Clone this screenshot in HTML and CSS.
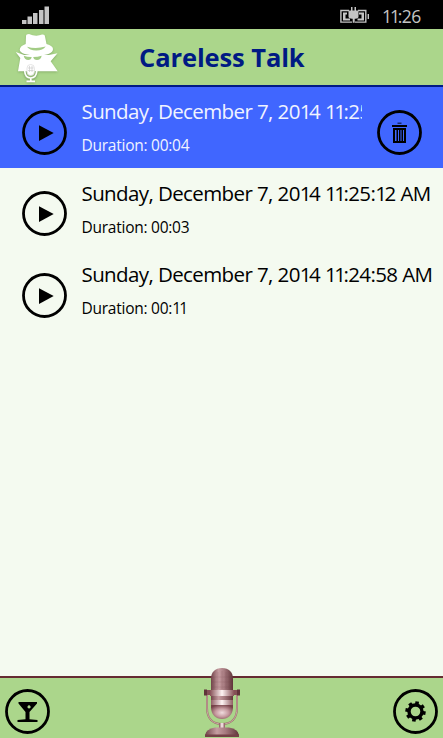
FILE: index.html
```html
<!DOCTYPE html>
<html lang="en">
<head>
<meta charset="utf-8">
<title>Careless Talk</title>
<link rel="stylesheet" href="styles.css">
</head>
<body>
<div class="status">
  <svg class="signal" width="28" height="18" viewBox="0 0 28 18" fill="#c4c4c4"><path d="M0 14h4.500v4H0zM5.500 10.500h4.500v7.500H5.500zM11 7h4.500v11H11zM17 4h4.500v14H17zM22.500 0.500h4.500v17.500h-4.500z"/></svg>
  <svg class="battery" width="30" height="18" viewBox="0 0 30 18"><path d="M9 4.500H.9v11.600H12M18 4.500h7.800v11.600H15M28.300 8v5" fill="none" stroke="#c4c4c4" stroke-width="1.400"/><path d="M3 6.500h4v2H5.500v4H10v2H3zM19 6.500h5v8h-6.500v-2h4v-4H19zM8.500 4.500H11V1h1.500v3.500h2V1H16v3.500h2.500v6q0 2-3 2.300h-.8v4h-2v-4H12q-3.500-.3-3.500-2.300z" fill="#c4c4c4"/></svg>
  <span class="clock"><span class="ones">11</span>:26</span>
</div>
<header class="header">
  <svg class="logo" width="46" height="52" viewBox="0 0 46 52">
    <g fill="#fff"><path d="M11 5Q11 3 14 3q7 3 13 .5 3-.5 3 2L31.500 13q6.500 2 6.500 5 0 6.300-16 6.300T4.700 19q0-4 6-6z"/><path d="M.7 21L9 24h25l8.500-1.700-6.800 8 7 10H3l2.300-13.300z"/></g>
    <path d="M12 15.800q9 2.500 18.700-.3-2.700 4-9.500 4T12 15.800M8.700 24.800q4 1.500 8 1.300-.5 3-3.500 3-3.500 0-4.500-4.300M18.200 26.100q4.500 0 8.500-1.300-1 4.300-4.700 4.300-3.300 0-3.800-3" fill="#a3cc86"/>
    <path d="M9.700 40.300q.5 7.500 6 7.500t6.100-7.500M15.800 47v4" fill="none" stroke="#86a673" stroke-width="3.200" opacity=".3"/>
    <path d="M9.700 40q.5 7 6 7t6.100-7M15.800 47v4M11.500 50.300h8.500" fill="none" stroke="#fff" stroke-width="1.700"/>
    <rect x="12" y="33.500" width="7.400" height="11" rx="3.700" fill="#fff" stroke="#ddd" stroke-width=".8"/><path d="M14.500 35v6M17 35v6M13 37h5.500M13 39.500h5.500" stroke="#ccc" stroke-width=".7"/>
  </svg>
  <h1 class="title">Careless Talk</h1>
</header>
<main class="list">
  <section class="row selected">
    <svg class="circle" width="45" height="45" viewBox="0 0 45 45"><circle class="ring" cx="22.500" cy="22.500" r="21"/><path d="M17 15.200l14.700 7.900L17 31z"/></svg>
    <div class="text"><div class="date">Sunday, December 7, 20<span class="ones">1</span>4 <span class="ones">11</span>:25</div><div class="duration">Duration: 00:04</div></div>
    <svg class="circle trash" width="45" height="45" viewBox="0 0 45 45"><circle class="ring" cx="22.500" cy="22.500" r="21"/><path d="M20.500 12.500h4v1.500h-4z" opacity=".6"/><path fill-rule="evenodd" d="M15 15h15v2H15zM16 18h13v15H16zm2 2v11h1.500V20zm3 0v11h1V20zm2.500 0v11h1V20zm2.500 0v11h1V20z"/></svg>
  </section>
  <section class="row">
    <svg class="circle" width="45" height="45" viewBox="0 0 45 45"><circle class="ring" cx="22.500" cy="22.500" r="21"/><path d="M17 15.200l14.700 7.900L17 31z"/></svg>
    <div class="text"><div class="date">Sunday, December 7, 20<span class="ones">1</span>4 <span class="ones">11</span>:25:<span class="ones">1</span>2 AM</div><div class="duration">Duration: 00:03</div></div>
  </section>
  <section class="row">
    <svg class="circle" width="45" height="45" viewBox="0 0 45 45"><circle class="ring" cx="22.500" cy="22.500" r="21"/><path d="M17 15.200l14.700 7.900L17 31z"/></svg>
    <div class="text"><div class="date">Sunday, December 7, 20<span class="ones">1</span>4 <span class="ones">11</span>:24:58 AM</div><div class="duration">Duration: 00:<span class="ones">11</span></div></div>
  </section>
</main>
<footer class="footer">
  <svg class="circle" width="45" height="45" viewBox="0 0 45 45"><circle class="ring" cx="22.500" cy="22.500" r="21"/><path fill-rule="evenodd" d="M13.500 13H32v1.500L24.500 23v7.200l8 .8v2h-20v-2l8-.8V23l-7-8.500zM24 16.300a1.600 1.600 0 1 0 .1 0z"/></svg>
  <svg class="mic" width="38" height="71" viewBox="0 0 38 71">
    <defs>
      <linearGradient id="body"><stop stop-color="#714349"/><stop offset=".35" stop-color="#c69da1"/><stop offset=".6" stop-color="#a77b80"/><stop offset="1" stop-color="#5f3439"/></linearGradient>
      <radialGradient id="bulb" cx=".5" cy=".55" r=".6"><stop stop-color="#f0dcde"/><stop offset=".5" stop-color="#c69a9f"/><stop offset="1" stop-color="#774249"/></radialGradient>
      <linearGradient id="band"><stop stop-color="#875157"/><stop offset=".5" stop-color="#fff4f4"/><stop offset="1" stop-color="#875157"/></linearGradient>
    </defs>
    <path d="M4 28v13c0 11 6 16 15 16s15-5 15-16V28" fill="none" stroke="#9b7168" stroke-width="2"/>
    <path d="M4 28v13c0 11 6 16 15 16s15-5 15-16V28" fill="none" stroke="#d4b5b3" stroke-width=".8"/>
    <path d="M2 23h34v5H2z" fill="#845056"/><path d="M1 22.500h3v6H1zM34 22.500h3v6h-3z" fill="#60343a"/>
    <path d="M8 12C8 5 12 1 19 1s11 4 11 11v12H8z" fill="url(#body)"/>
    <path d="M11 10v12M15 5v17M19 4v18M23 5v17M27 9v13M9 10h20M9 15h20M9 20h20" stroke="#693b42" stroke-width=".5" opacity=".3"/>
    <path d="M7 23h24v6H7zM8 33h22v5H8z" fill="url(#band)"/><path d="M8 29h22v4H8z" fill="url(#body)"/>
    <path d="M8 38h22v2c0 8-5 12-11 12S8 48 8 40z" fill="url(#bulb)"/>
    <path d="M16 56h6v5h-6z" fill="url(#band)"/><path d="M2 68q1-6 10-7.500h14q9 1.500 10 7.500v2H2z" fill="url(#body)"/><path d="M2 67.500h34v2.500H2z" fill="#744147"/>
  </svg>
  <svg class="circle" width="45" height="45" viewBox="0 0 45 45"><circle class="ring" cx="22.500" cy="22.500" r="21"/><circle cx="22.500" cy="22.500" r="6.500" fill="none" stroke="#000" stroke-width="3.400"/><g transform="rotate(10 22.500 22.500)"><path d="M22.500 12.300v4M22.500 28.700v4M12.300 22.500h4M28.700 22.500h4M15.300 15.300l2.800 2.800M26.900 26.900l2.800 2.800M29.700 15.300l-2.800 2.800M18.100 26.900l-2.800 2.800" stroke="#000" stroke-width="3.600"/></g></svg>
</footer>
</body>
</html>
```
FILE: styles.css
```css
* { box-sizing: border-box; }
body { margin: 0; width: 443px; height: 738px; display: flex; flex-direction: column; overflow: hidden; background: #f4faf0; color: #000; font-family: "Open Sans", "Noto Sans", sans-serif; }
svg { display: block; flex: none; }
.status { height: 29px; flex: none; background: #000; color: #c4c4c4; display: flex; align-items: flex-start; padding: 6px 22px 0; }
.battery { margin-left: auto; margin-right: 12px; }
.clock { width: 39px; font-size: 17.500px; line-height: 20px; letter-spacing: -.6px; white-space: nowrap; }
.header { height: 58px; flex: none; display: grid; grid-template-columns: 139px 1fr; align-items: start; background: #abd68b; border-bottom: 2px solid #001a83; }
.logo { margin: 2px 0 0 15px; filter: drop-shadow(0 1px 1px rgba(70, 100, 50, .35)); }
.title { margin: 10px 0 0; color: #001a83; font-size: 25.500px; line-height: 36px; font-weight: 700; letter-spacing: -.1px; white-space: nowrap; }
.list { flex: 1; }
.row { height: 81.500px; display: flex; align-items: flex-start; padding: 0 0 0 22px; }
.selected { height: 81px; background: #4066ff; color: #f0f3ff; }
.selected + .row { margin-top: .5px; }
.circle { margin-top: 22.500px; }
.ring { fill: none; stroke: #000; stroke-width: 2.800; }
.text { flex: 1; min-width: 0; margin-left: 14.500px; overflow: hidden; white-space: nowrap; }
.date { margin-top: 9px; font-size: 20.500px; line-height: 30px; letter-spacing: -.6px; }
.duration { margin-top: 7px; font-size: 15.500px; line-height: 24px; letter-spacing: -.25px; }
.ones { letter-spacing: -.12em; }
.trash { margin-right: 21.500px; margin-left: 15px; }
.footer { height: 62px; flex: none; background: #abd68b; border-top: 2px solid #652b31; display: flex; justify-content: space-between; padding: 0 5px; }
.footer .circle { margin-top: 11px; }
.mic { margin-top: -11px; }
```
